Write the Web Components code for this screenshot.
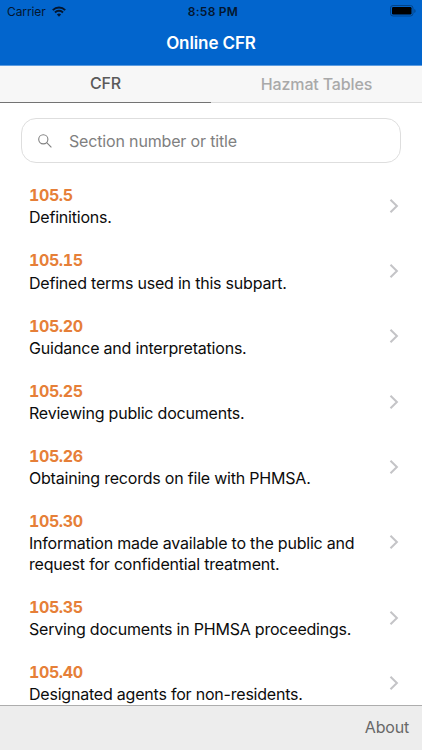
<!DOCTYPE html>
<html lang="en">
<head>
<meta charset="UTF-8">
<title>Online CFR</title>
<style>
  html, body {
    margin: 0;
    height: 100%;
    overflow: hidden;
  }
  body {
    font-family: Inter, "Liberation Sans", sans-serif;
    font-size: 16px;
    background: #fff;
  }
</style>
</head>
<body>
<cfr-app>
  <status-bar slot="header"></status-bar>
  <nav-header slot="header">Online CFR</nav-header>
  <tab-bar slot="header">
    <tab-item active>CFR</tab-item>
    <tab-item>Hazmat Tables</tab-item>
  </tab-bar>
  <search-box placeholder="Section number or title"></search-box>
  <section-list></section-list>
  <app-toolbar slot="footer">About</app-toolbar>
</cfr-app>

<script>
class CfrApp extends HTMLElement {
  constructor() {
    super();
    this.attachShadow({ mode: 'open' });
    this.shadowRoot.innerHTML = `
      <style>
        :host {
          display: flex;
          flex-direction: column;
          height: 100vh;
          overflow: hidden;
        }
        header {
          flex: none;
        }
        main {
          flex: 1;
          min-height: 0;
          overflow: hidden;
        }
      </style>
      <header><slot name="header"></slot></header>
      <main><slot></slot></main>
      <slot name="footer"></slot>
    `;
  }
}

class StatusBar extends HTMLElement {
  constructor() {
    super();
    this.attachShadow({ mode: 'open' });
    this.shadowRoot.innerHTML = `
      <style>
        :host {
          display: grid;
          grid-template-columns: 1fr auto 1fr;
          align-items: center;
          height: 22px;
          padding: 0 5px 0 7px;
          background: #0265cd;
          color: #04162f;
          font-size: 12px;
        }
        .carrier {
          display: flex;
          align-items: center;
          gap: 6px;
          letter-spacing: -0.1px;
        }
        .time {
          padding-left: 2px;
          font-weight: 600;
          letter-spacing: 0.25px;
        }
        .battery {
          justify-self: end;
        }
        svg {
          display: block;
        }
      </style>
      <div class="carrier">
        <span>Carrier</span>
        <svg width="14" height="11" viewBox="0 0 14 11" fill="none" stroke="#04162f" stroke-width="2">
          <path d="M0.8 4.1a8.9 8.9 0 0 1 12.4 0"/>
          <path d="M3 6.5a5.7 5.7 0 0 1 8 0"/>
          <path d="M7 10.7L4.9 8.5a3 3 0 0 1 4.2 0z" fill="#04162f" stroke="none"/>
        </svg>
      </div>
      <div class="time">8:58 PM</div>
      <svg class="battery" width="27" height="12" viewBox="0 0 27 12">
        <rect x="0.5" y="0.5" width="22.5" height="10.5" rx="2.6" fill="none" stroke="#034489"/>
        <rect x="2" y="2" width="19.5" height="7.5" rx="1.2" fill="#000"/>
        <path d="M24.3 4v4q1.3-.6 1.3-2t-1.3-2z" fill="#034489"/>
      </svg>
    `;
  }
}

class NavHeader extends HTMLElement {
  constructor() {
    super();
    this.attachShadow({ mode: 'open' });
    this.shadowRoot.innerHTML = `
      <style>
        :host {
          display: flex;
          align-items: center;
          justify-content: center;
          box-sizing: border-box;
          height: 44px;
          padding-bottom: 2px;
          border-bottom: 1px solid #5c9ce0;
          background: #0265cd;
          color: #fff;
          font-size: 17px;
          font-weight: 600;
          letter-spacing: -0.1px;
        }
      </style>
      <slot></slot>
    `;
  }
}

class TabBar extends HTMLElement {
  constructor() {
    super();
    this.attachShadow({ mode: 'open' });
    this.shadowRoot.innerHTML = `
      <style>
        :host {
          display: grid;
          grid-template-columns: 1fr 1fr;
          height: 37px;
          background: #f7f7f7;
        }
      </style>
      <slot></slot>
    `;
  }
}

class TabItem extends HTMLElement {
  constructor() {
    super();
    this.attachShadow({ mode: 'open' });
    this.shadowRoot.innerHTML = `
      <style>
        :host {
          display: flex;
          align-items: center;
          justify-content: center;
          box-sizing: border-box;
          border-bottom: 1px solid #dcdcdc;
          color: #a9a9a9;
          font-weight: 500;
          letter-spacing: -0.15px;
        }
        :host([active]) {
          padding-bottom: 2px;
          border-bottom-color: #737373;
          color: #5a5a5a;
        }
      </style>
      <slot></slot>
    `;
  }
}

class SearchBox extends HTMLElement {
  constructor() {
    super();
    this.attachShadow({ mode: 'open' });
    this.shadowRoot.innerHTML = `
      <style>
        :host {
          display: flex;
          align-items: center;
          box-sizing: border-box;
          height: 45px;
          margin: 15px 21px 10.4px;
          padding-left: 16px;
          gap: 17px;
          border: 1px solid #dedede;
          border-radius: 15px;
          color: #808080;
          letter-spacing: -0.16px;
        }
      </style>
      <svg width="14" height="14" viewBox="0 0 14 14" fill="none" stroke="#808080" stroke-width="1.1">
        <circle cx="5.3" cy="5.3" r="4.6"/>
        <path d="M8.7 8.7L13.4 13.4"/>
      </svg>
      <span></span>
    `;
  }

  connectedCallback() {
    this.shadowRoot.querySelector('span').textContent = this.getAttribute('placeholder');
  }
}

class SectionRow extends HTMLElement {
  constructor() {
    super();
    this.attachShadow({ mode: 'open' });
    this.shadowRoot.innerHTML = `
      <style>
        :host {
          display: flex;
          align-items: center;
          justify-content: space-between;
          padding: 10.8px 23px 10.8px 29px;
        }
        .number {
          color: #e67f38;
          font-weight: 700;
          font-variant-numeric: tabular-nums;
          line-height: 22px;
          letter-spacing: -0.4px;
        }
        .title {
          max-width: 340px;
          padding-top: 1.2px;
          color: #0c0c0c;
          line-height: 20.4px;
          letter-spacing: -0.21px;
        }
        svg {
          flex: none;
        }
      </style>
      <div>
        <div class="number"><slot name="number"></slot></div>
        <div class="title"><slot></slot></div>
      </div>
      <svg width="10" height="16" viewBox="0 0 10 16" fill="none" stroke="#c4c4c7" stroke-width="2">
        <path d="M1.5 1.7L7.9 8L1.5 14.3"/>
      </svg>
    `;
  }
}

class SectionList extends HTMLElement {
  constructor() {
    super();
    this.attachShadow({ mode: 'open' });
    this.shadowRoot.innerHTML = `
      <style>
        :host {
          display: block;
        }
      </style>
    `;
  }

  connectedCallback() {
    const sections = [
      { number: '105.5', title: 'Definitions.' },
      { number: '105.15', title: 'Defined terms used in this subpart.' },
      { number: '105.20', title: 'Guidance and interpretations.' },
      { number: '105.25', title: 'Reviewing public documents.' },
      { number: '105.26', title: 'Obtaining records on file with PHMSA.' },
      { number: '105.30', title: 'Information made available to the public and request for confidential treatment.' },
      { number: '105.35', title: 'Serving documents in PHMSA proceedings.' },
      { number: '105.40', title: 'Designated agents for non-residents.' },
    ];

    sections.forEach(section => {
      const row = document.createElement('section-row');
      row.innerHTML = `<span slot="number">${section.number}</span>${section.title}`;
      this.shadowRoot.appendChild(row);
    });
  }
}

class AppToolbar extends HTMLElement {
  constructor() {
    super();
    this.attachShadow({ mode: 'open' });
    this.shadowRoot.innerHTML = `
      <style>
        :host {
          display: flex;
          flex: none;
          align-items: center;
          justify-content: flex-end;
          box-sizing: border-box;
          height: 45px;
          padding: 0 13px 2px 0;
          border-top: 1px solid #adadad;
          background: #ededed;
          color: #686868;
          letter-spacing: -0.2px;
        }
      </style>
      <slot></slot>
    `;
  }
}

customElements.define('cfr-app', CfrApp);
customElements.define('status-bar', StatusBar);
customElements.define('nav-header', NavHeader);
customElements.define('tab-bar', TabBar);
customElements.define('tab-item', TabItem);
customElements.define('search-box', SearchBox);
customElements.define('section-row', SectionRow);
customElements.define('section-list', SectionList);
customElements.define('app-toolbar', AppToolbar);
</script>
</body>
</html>
